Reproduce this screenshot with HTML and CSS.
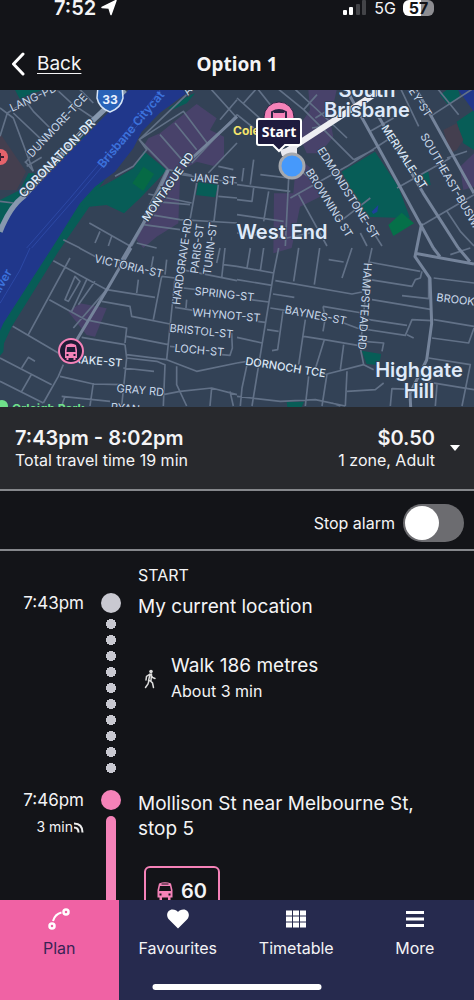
FILE: index.html
```
<!DOCTYPE html>
<html lang="en">
<head>
    <meta charset="UTF-8">
    <meta name="viewport" content="width=device-width, initial-scale=1">
    <title>Option 1</title>
    <link rel="stylesheet" href="styles.css">
</head>
<body>
    <div class="app">
        <div class="status-bar">
            <div class="status-time">
                <span>7:52</span>
                <svg width="16" height="16" viewBox="0 0 16 16"><path d="M15 .5 10 14.500 8 8 1 7.500z" fill="#fff" stroke="#fff" stroke-width="1.500" stroke-linejoin="round"/></svg>
            </div>
            <div class="status-right">
                <svg width="24" height="16" viewBox="0 0 24 16">
                    <rect x="0" y="10" width="4" height="5" rx="1" fill="#fff"/>
                    <rect x="6" y="7" width="4" height="8" rx="1" fill="#fff"/>
                    <rect x="13" y="4" width="4" height="11" rx="1" fill="#434448"/>
                    <rect x="19" y="0" width="4" height="15" rx="1" fill="#434448"/>
                </svg>
                <span>5G</span>
                <span class="battery">57</span>
            </div>
        </div>

        <header class="top-bar">
            <a class="back" href="#">
                <svg width="14" height="24" viewBox="0 0 14 24"><path d="M12 2 2.500 12 12 22" fill="none" stroke="#fff" stroke-width="3" stroke-linecap="round" stroke-linejoin="round"/></svg>
                <span>Back</span>
            </a>
            <h1>Option 1</h1>
        </header>

        <main class="content">
            <svg class="map" viewBox="0 0 474 317" preserveAspectRatio="xMidYMid slice">
                <!-- land, water and parks -->
                <rect class="land" x="-500" width="1500" height="317"/>
                <g transform="scale(.33333)">
                    <path class="park" d="M0 330 60 300 85 250 105 250 90 290 330 65 400 0 500 0 300 290 178 480 35 710 12 760 10 785 0 797z"/>
                    <path class="park" d="M505 55 570 15 585 10 560 40 515 60z"/>
                    <path class="park" d="M45 0H125L60 28z"/>
                    <path fill="#443f4f" d="M0 130 78 245 50 300 0 300z"/>
                    <path class="park" d="M430 182 500 240 480 262 420 325 372 370 320 345 268 350 178 480 150 474 285 300 345 268 400 235z"/>
                    <path fill="#344156" d="M430 120 420 155 435 178 400 235 345 265 300 288 360 230 400 150z"/>
                    <path fill="#066a45" d="M430 230 462 252 430 303 397 280z"/>
                    <path class="water" d="M385 0H575L545 20 480 68 425 125 400 175 345 245 285 290 240 340 165 460 10 700 0 722V430L30 370 80 315 320 72z"/>
                    <path d="M80 474 210 325 420 75 480 0M95 474 225 325 435 80M0 640 60 540 90 474" fill="none" stroke="#2c48a5" stroke-width="3"/>
                    <path class="zone" d="M560 65 590 42 650 85 630 120 672 140 672 205 640 228 590 215 540 245 500 240 430 170 445 145 480 130z"/>
                    <path class="zone" d="M505 245 540 265 535 400 470 440 430 474 410 450 430 390z"/>
                    <path class="zone" d="M240 640 320 655 285 740 260 735 205 665z"/>
                    <path class="park" d="M595 275 655 285 645 322 588 315z"/>
                    <path class="zone" d="M925 0 1010 0 990 90 1000 140 960 190 920 190 890 120 930 60z"/>
                    <path class="zone" d="M822 310 880 310 890 200 940 240 960 320 900 350 875 474 820 490z"/>
                    <path class="zone" d="M1380 230 1422 190V290L1390 300z"/>
                    <path class="park" d="M1025 245 1125 185 1195 290 1230 385 1095 380z"/>
                    <path fill="#057049" d="M1165 405 1205 368 1242 400 1180 438z"/>
                    <path fill="#1e4199" d="M1115 365 1135 345 1132 365 1120 372z"/>
                    <path class="park" d="M1268 250 1285 245 1292 285 1270 285zM1320 15 1340 0H1375L1380 20 1345 45zM1370 95 1422 60V180L1390 160z"/>
                    <path class="water" d="M1375 0H1422V65z"/>
                    <path fill="#443f4f" d="M1330 120 1370 100 1390 150 1370 180 1350 190z"/>
                    <path class="park" d="M1085 782 1143 792 1138 825 1100 822zM860 935H912L905 951H862z"/>
                </g>

                <!-- minor roads -->
                <g class="roads" transform="scale(.33333)">
                    <g transform="translate(0 -6)">
                        <path d="M0 60 40 90 100 250M0 145 22 75 80 40M40 75 130 160 75 225M70 30 100 70 150 120M75 220 100 250M80 235 125 208M165 0 230 60M220 50 280 90M235 0 280 45"/>
                        <path d="M418 155 550 70 625 170M418 155 505 245 575 262M480 140 550 220M525 105 590 185M560 20 418 155 440 185 400 235 345 265M630 0 711 90M711 35 660 95M575 225 711 80M625 255 711 165M500 245 430 390M655 235 700 245M530 258 711 285M590 285 570 395M655 290 642 400M445 318 575 345M460 340 570 350M655 325 711 330M450 380 540 395 711 405M430 410 540 425M268 405 390 474M300 430 285 465M335 445 325 474M440 395 395 474M410 465 470 480M190 455 240 480M0 340 40 345"/>
                    </g>
                    <g transform="translate(711 -6)">
                        <path d="M0 30 90 110M20 45 60 0M0 80 50 120M120 0 200 65 350 215M170 0 235 60 330 150M200 65 240 20M235 90 300 50M225 120 290 110M350 215 410 185M160 330 330 235 460 150M185 320 270 474M220 270 180 240M60 0 100 50M70 260 155 270M0 290 160 310M155 270 145 474M20 240 15 280M50 215 40 290M0 335 45 340 50 300M0 380 140 400M95 310 80 400M310 400 400 330M370 435 390 474M0 435 150 450 240 430M350 340 435 474M480 300 640 210M550 415 711 320M400 130 470 90M580 85 711 0M490 0 545 115M600 0 665 80M630 210 690 190M630 370 670 430 711 474"/>
                    </g>
                    <g transform="translate(0 474)">
                        <path d="M160 38 320 125 465 148M210 30 85 260M148 155 265 220M38 235 175 315M238 0 290 28M260 95 215 190M320 125 220 240M285 100 235 170M305 160 390 175 395 205 510 228M270 218 380 240 375 285M245 268 375 290M380 265 505 290M375 290 380 330 365 474M380 320 500 335 590 370 711 345M380 330 470 340 495 350 490 474M370 360 462 370M180 385 280 408 365 410M190 350 175 385 130 465M0 330 155 410M65 360 85 328 105 340M95 378 65 430M0 400 130 465M280 405 270 474M185 445 330 460M195 445 185 474M490 440 540 430 635 420 711 440M530 355 530 410 560 474M635 420 630 474M690 430 700 474M460 25 450 80M500 35 495 80M415 95 410 135M485 85 460 215M485 85 525 90M525 90 500 335M550 120 590 125M525 178 585 188M560 155 558 180M510 295 530 297M545 65 711 98M660 0 650 45M675 0 665 90M670 50 711 55M665 320 690 322 697 300 695 255"/>
                        <path d="M225 85 195 155 205 160 240 100z"/>
                    </g>
                    <g transform="translate(711 474)">
                        <path d="M0 55 110 75M40 0 30 60M80 0 70 68M125 0 110 75 45 474M185 0 170 100M248 0 232 110M0 95 105 112M115 98 345 138 375 132M275 35 320 42M345 0 315 90M405 0 395 45 370 300 380 350M395 42 550 70M398 95 525 115 535 95 550 90 555 70M405 155 585 185M495 143 575 152 575 90M108 138 172 148M40 155 95 162M100 180 150 188M60 220 85 223M138 190 122 305 105 308M90 245 125 250M205 215 185 350M258 175 265 210 258 250M258 175 375 195M375 212 510 232M320 225 360 240 505 262 525 215 585 218M510 260 530 270M0 268 75 285M200 265 262 275 380 295M262 275 235 362M320 290 310 365M380 280 440 285 435 310M235 380 270 378 380 350 410 365M270 378 255 474M215 385 205 474M330 370 325 474M30 350 15 420 10 474M0 345 30 340M330 430 415 425 440 405M0 445 130 460 235 455 325 474M285 465 310 474M590 90 711 105M590 215 711 235M585 270 695 285 711 240M575 330 700 350 675 474M560 400 711 425M465 420 460 474M465 422 520 424M600 410 595 474M640 20 700 0"/>
                    </g>
                </g>
                <!-- main roads -->
                <g class="roads wide" transform="scale(.33333)">
                    <path d="M393 474 320 600 230 750M505 240 430 400 360 520M711 80 570 210"/>
                    <path d="M1040 0 1200 290 1300 474M1130 70 1270 310 1375 474M1250 0 1422 310M1265 400 1245 500 1290 565 1295 700 1280 810 1230 910 1232 951M1245 490 1422 522M1300 474 1320 500M1375 474 1410 515"/>
                    <path d="M375 0 275 95 70 320Q30 350 0 425" stroke="#8798ae" stroke-width="16"/>
                </g>
                <path class="route" d="M287 61 378 2"/>

                <!-- street names -->
                <g class="street">
                    <text transform="translate(12 22) rotate(-25)">LANG-PDE</text>
                    <text class="mid" transform="translate(60 38) rotate(-47)">DUNMORE-TCE</text>
                    <text class="mid big" transform="translate(60 71) rotate(-46)">CORONATION-DR</text>
                    <text class="mid river" transform="translate(134 42) rotate(-50)">Brisbane Citycat</text>
                    <text class="mid river" transform="translate(5 195) rotate(-60)">River</text>
                    <text class="mid bold" transform="translate(171 99) rotate(-55)">MONTAGUE RD</text>
                    <text transform="translate(188 6) rotate(-50)">A</text>
                    <text class="mid" transform="translate(213 93) rotate(5)">JANE ST</text>
                    <text class="mid" transform="translate(128 180) rotate(13)">VICTORIA-ST</text>
                    <text class="mid" transform="translate(186 172) rotate(-82)">HARDGRAVE-RD</text>
                    <text class="mid" transform="translate(201 159) rotate(-83)">PARIS-ST</text>
                    <text class="mid" transform="translate(214 159) rotate(-83)">TURIN-ST</text>
                    <text class="mid" transform="translate(224 208) rotate(6)">SPRING-ST</text>
                    <text class="mid" transform="translate(226 229) rotate(5)">WHYNOT-ST</text>
                    <text class="mid" transform="translate(201 245) rotate(6)">BRISTOL-ST</text>
                    <text class="mid" transform="translate(199 264) rotate(5)">LOCH-ST</text>
                    <text class="end bold" transform="translate(122 277) rotate(5)">DRAKE-ST</text>
                    <text class="mid" transform="translate(140 304) rotate(5)">GRAY RD</text>
                    <text class="mid" transform="translate(125 322) rotate(5)">RYAN</text>
                    <text class="mid" transform="translate(315 229) rotate(11)">BAYNES-ST</text>
                    <text class="mid bold" transform="translate(285 281) rotate(9)">DORNOCH TCE</text>
                    <text class="mid" transform="translate(361 216) rotate(94)">HAMPSTEAD RD</text>
                    <text transform="translate(436 211) rotate(7)">BROOK-ST</text>
                    <text class="mid" transform="translate(345 105) rotate(58)">EDMONDSTONE-ST</text>
                    <text class="mid" transform="translate(326 115) rotate(58)">BROWNING ST</text>
                    <text class="mid bold" transform="translate(401 69) rotate(57)">MERIVALE-ST</text>
                    <text class="mid" transform="translate(413 8) rotate(57)">GREY-ST</text>
                    <text transform="translate(420 46) rotate(60)">SOUTHEAST-BUSWAY</text>
                </g>
                <g class="suburb">
                    <text x="367" y="7">South</text>
                    <text x="367" y="27">Brisbane</text>
                    <text x="282" y="149">West End</text>
                    <text x="419" y="287">Highgate</text>
                    <text x="419" y="308">Hill</text>
                </g>
                <text class="place coles" x="233" y="45">Coles</text>
                <text class="place green" x="12" y="323">Orleigh Park</text>
                <circle cx="2" cy="316" r="6" fill="#6fe08a"/>

                <!-- route shield and hospital -->
                <path d="M98-4H122L123 8Q121 18 110 22 99 18 97 8z" fill="#2862b8" stroke="#d6e4f6" stroke-width="1.500"/>
                <text class="shield" x="110" y="14">33</text>
                <circle cx="0" cy="67" r="8" fill="#e5636b"/>
                <path d="M-4 67H4M0 63V71" stroke="#3a2030" stroke-width="2"/>

                <!-- bus stops -->
                <g id="stop-a">
                    <circle cx="71" cy="261" r="12" fill="#1e1b36" stroke="#f582b8" stroke-width="2"/>
                    <path fill="#f582b8" fill-rule="evenodd" d="M66 255Q71 252 76 255L77 260V268H75.500V270H73.500V268H68.500V270H66.500V268H65V260zM67 257 66.500 262H75.500L75 257zM66.500 264V266H68.500V264zM73.500 264V266H75.500V264z"/>
                </g>
                <circle cx="279" cy="27" r="15" fill="#f582b8" stroke="#2c2444"/>
                <path d="M272 31V22Q279 18 286 22V31M274 22H284" fill="none" stroke="#2c2444" stroke-width="2"/>

                <!-- start marker -->
                <path fill="#e8e8ee" d="M280 60 297 55V66H282z"/>
                <path d="M259 29H299Q301 29 301 31V53Q301 55 299 55H285L279 61 273 55H259Q257 55 257 53V31Q257 29 259 29z" fill="#1e1b3e" stroke="#fff" stroke-width="2"/>
                <text class="start" x="279" y="47">Start</text>
                <circle cx="292" cy="76" r="12" fill="#4699fb" stroke="#a5a8ae" stroke-width="3"/>
            </svg>

            <section class="summary">
                <div class="summary-trip">
                    <strong>7:43pm - 8:02pm</strong>
                    <span>Total travel time 19 min</span>
                </div>
                <div class="summary-fare">
                    <strong>$0.50</strong>
                    <span>1 zone, Adult</span>
                </div>
                <button class="expand" type="button" aria-label="Fare details">
                    <svg width="10" height="6" viewBox="0 0 10 6"><path d="M0 0H10L5 6z" fill="#fff"/></svg>
                </button>
            </section>

            <div class="alarm">
                <label for="stop-alarm">Stop alarm</label>
                <input class="switch" type="checkbox" id="stop-alarm">
            </div>

            <section class="journey">
                <h2>START</h2>
                <ol class="steps">
                    <li class="step">
                        <div class="time">7:43pm</div>
                        <div class="track">
                            <span class="dot"></span>
                            <span class="walk-line"></span>
                        </div>
                        <div class="detail">
                            <div class="place-name">My current location</div>
                            <div class="leg">
                                <svg width="24" height="20" viewBox="0 0 24 20">
                                    <circle cx="13" cy="2.500" r="1.800" fill="#ddd"/>
                                    <path d="M12 5 10.500 12M12 5 8.500 7.500 8 11M13 6 14.500 8.500 17 9.500M13.500 5 13 11.500" fill="none" stroke="#ddd" stroke-width="1.500" stroke-linecap="round"/>
                                    <path d="M11 11.500 10 15 7.500 18.500M12 11.500 14.500 14 15.500 18.500" fill="none" stroke="#ddd" stroke-width="1.500" stroke-linecap="round"/>
                                </svg>
                                <div>
                                    <div class="place-name">Walk 186 metres</div>
                                    <div class="leg-time">About 3 min</div>
                                </div>
                            </div>
                        </div>
                    </li>
                    <li class="step bus">
                        <div class="time">
                            7:46pm
                            <div class="live">3 min<svg width="11" height="11" viewBox="0 0 11 11"><path d="M1 1.500Q9.500 1.500 9.500 10.500M1 5.500Q5.500 5.500 5.500 10.500" fill="none" stroke="#eee" stroke-width="2"/></svg></div>
                        </div>
                        <div class="track">
                            <span class="dot"></span>
                            <span class="bus-line"></span>
                        </div>
                        <div class="detail">
                            <div class="place-name">Mollison St near Melbourne St, stop 5</div>
                            <div class="route-badge">
                                <svg width="16" height="18" viewBox="0 0 16 18"><path fill="#f582b8" fill-rule="evenodd" d="M2 1.500Q8-.8 14 1.500L15.500 8V15.500H13.500V18H11V15.500H5V18H2.500V15.500H.5V8zM4.500 1.500V2.500H11.500V1.500zM3 4 2 9H14L13 4zM2.500 11.500V13.500H4.500V11.500zM11.500 11.500V13.500H13.500V11.500z"/></svg>
                                <span>60</span>
                            </div>
                        </div>
                    </li>
                </ol>
            </section>
        </main>

        <nav class="tabs">
            <a class="tab active" href="#">
                <svg width="24" height="24" viewBox="0 0 24 24" fill="none" stroke="#fff" stroke-width="2.500"><circle cx="5" cy="19" r="2.500"/><circle cx="19" cy="5" r="2.500"/><path d="M6 14Q8 7 14.500 5.500" stroke-width="2"/></svg>
                <span>Plan</span>
            </a>
            <a class="tab" href="#">
                <svg width="24" height="24" viewBox="0 0 24 24"><path d="M12 21.500 3 12.500C-1 8 2 2.500 6.500 2.500 9 2.500 11 3.500 12 5 13 3.500 15 2.500 17.500 2.500 22 2.500 25 8 21 12.500z" fill="#fff"/></svg>
                <span>Favourites</span>
            </a>
            <a class="tab" href="#">
                <svg width="24" height="24" viewBox="0 0 24 24" fill="#fff"><path d="M2 3.500h6v5H2zM9 3.500h6v5H9zM16 3.500h6v5h-6zM2 9.500h6v5H2zM9 9.500h6v5H9zM16 9.500h6v5h-6zM2 15.500h6v5H2zM9 15.500h6v5H9zM16 15.500h6v5h-6z"/></svg>
                <span>Timetable</span>
            </a>
            <a class="tab" href="#">
                <svg width="24" height="24" viewBox="0 0 24 24"><path d="M3 5.500H21M3 12H21M3 18.500H21" stroke="#fff" stroke-width="3"/></svg>
                <span>More</span>
            </a>
            <span class="home-indicator"></span>
        </nav>
    </div>
</body>
</html>
```

FILE: styles.css
```
* {
    box-sizing: border-box;
}
body {
    margin: 0;
    background-color: #131418;
    color: #f4f4f6;
    font-family: Inter, "Liberation Sans", sans-serif;
    font-size: 16px;
    line-height: 20px;
}
svg {
    display: block;
    flex: none;
}
a {
    color: inherit;
}
.app {
    display: flex;
    flex-direction: column;
    height: 100vh;
    overflow: hidden;
}

/* status bar */
.status-bar {
    display: flex;
    flex: none;
    justify-content: space-between;
    height: 38px;
    padding: 0 40px 0 54px;
    line-height: 16px;
}
.status-time {
    display: flex;
    gap: 5px;
    font-size: 20px;
    font-weight: 600;
}
.status-right {
    display: flex;
    align-items: flex-start;
    gap: 7px;
}
.battery {
    width: 31px;
    border-radius: 6px;
    background: linear-gradient(to right, #fff 57%, #8d8d91 57%);
    color: #131418;
    font-weight: 700;
    text-align: center;
}

/* header */
.top-bar {
    display: grid;
    grid-template-columns: 1fr auto 1fr;
    flex: none;
    align-items: center;
    height: 52px;
    padding: 0 11px;
}
.back {
    display: flex;
    align-items: center;
    gap: 12px;
    font-size: 19px;
    text-decoration: none;
}
.back span {
    text-decoration: underline;
    text-underline-offset: 3px;
}
.top-bar h1 {
    margin: 0;
    font-family: "Noto Sans", sans-serif;
    font-size: 19px;
    font-weight: 700;
}
.content {
    flex: 1;
    min-height: 0;
    overflow-y: auto;
    scrollbar-width: none;
}

/* map */
.map {
    width: 100%;
    height: 317px;
}
.land {
    fill: #334256;
}
.water {
    fill: #20378b;
}
.park {
    fill: #075d57;
}
.zone {
    fill: #48426a;
}
.roads {
    fill: none;
    stroke: #627187;
    stroke-width: 5;
    stroke-linejoin: round;
}
.roads.wide {
    stroke: #75849b;
    stroke-width: 9;
}
.route {
    stroke: #eeeef2;
    stroke-width: 6;
}
.street {
    fill: #c9d8ea;
    stroke: #334256;
    stroke-width: 2;
    paint-order: stroke;
    font-size: 11px;
}
.mid {
    text-anchor: middle;
}
.end {
    text-anchor: end;
}
.bold {
    font-weight: 500;
    fill: #dce8f6;
}
.big {
    font-size: 12px;
    font-weight: 600;
    fill: #dce8f6;
}
.river {
    fill: #3c72dc;
    stroke: none;
    font-size: 12px;
    font-weight: 600;
}
.suburb {
    fill: #dfeafa;
    stroke: #334256;
    stroke-width: 2;
    paint-order: stroke;
    font-size: 20px;
    font-weight: 600;
    text-anchor: middle;
}
.place {
    font-size: 12px;
    font-weight: 700;
}
.coles {
    fill: #f3e36b;
}
.green {
    fill: #6fe08a;
}
.shield {
    fill: #e8f1ff;
    font-size: 12px;
    font-weight: 700;
    text-anchor: middle;
}
.start {
    fill: #fff;
    font-family: "Noto Sans", sans-serif;
    font-size: 14px;
    font-weight: 700;
    text-anchor: middle;
}

/* trip summary */
.summary {
    display: flex;
    align-items: flex-start;
    padding: 19px 14px 19px 15px;
    border-bottom: 2px solid #85878b;
    background-color: #28292d;
}
.summary strong {
    display: block;
    font-size: 20px;
    font-weight: 600;
    line-height: 24px;
}
.summary-trip {
    flex: 1;
}
.summary-fare {
    text-align: right;
}
.expand {
    align-self: center;
    margin-left: 15px;
    padding: 0;
    border: none;
    background: none;
}
.alarm {
    display: flex;
    align-items: center;
    justify-content: flex-end;
    gap: 8px;
    height: 60px;
    padding: 5px 10px 0 0;
    border-bottom: 2px solid #85878b;
}
.switch {
    width: 61px;
    height: 38px;
    margin: 0;
    padding: 2px;
    border-radius: 19px;
    background-color: #6c6c70;
    appearance: none;
}
.switch::before {
    content: "";
    display: block;
    width: 34px;
    height: 34px;
    border-radius: 50%;
    background-color: #fff;
}
.switch:checked::before {
    margin-left: 23px;
}

/* journey steps */
.journey {
    padding-top: 14px;
}
.journey h2 {
    margin: 0 0 8px 138px;
    font-size: 16px;
    font-weight: 400;
}
.steps {
    margin: 0;
    padding: 0;
    list-style: none;
}
.step {
    display: grid;
    grid-template-columns: 84px 54px 1fr;
    padding-right: 24px;
}
.time {
    font-size: 17px;
    text-align: right;
}
.track {
    display: flex;
    flex-direction: column;
    align-items: center;
}
.dot {
    width: 20px;
    height: 20px;
    border-radius: 50%;
    background-color: #c9c9d1;
}
.walk-line {
    width: 10px;
    height: 160px;
    margin: 3px 0 14px;
    background: radial-gradient(circle, #c9c9d1 5px, transparent 5px) 0 0 / 10px 16px;
}
.bus .dot {
    background-color: #f582b8;
}
.bus-line {
    flex: 1;
    width: 10px;
    margin-top: 6px;
    border-radius: 5px 5px 0 0;
    background-color: #f582b8;
}
.detail {
    padding-top: 1px;
}
.place-name {
    font-size: 19px;
    line-height: 25px;
}
.leg {
    display: flex;
    align-items: center;
    gap: 9px;
    margin-top: 34px;
}
.leg-time {
    line-height: 26px;
}
.live {
    display: flex;
    align-items: center;
    justify-content: flex-end;
    margin-top: 7px;
    font-size: 14px;
}
.route-badge {
    display: flex;
    align-items: center;
    justify-content: center;
    gap: 8px;
    width: 76px;
    height: 50px;
    margin: 25px 0 20px 6px;
    border: 2px solid #f582b8;
    border-radius: 6px;
    font-size: 20px;
    font-weight: 600;
}

/* bottom tabs */
.tabs {
    position: relative;
    display: grid;
    grid-template-columns: repeat(4, 1fr);
    flex: none;
    height: 100px;
    background-color: #262a4e;
}
.tab {
    display: flex;
    flex-direction: column;
    align-items: center;
    gap: 7px;
    padding-top: 7px;
    text-decoration: none;
}
.tab.active {
    background-color: #f062a4;
    color: #3a2355;
}
.home-indicator {
    position: absolute;
    bottom: 10px;
    left: 50%;
    width: 169px;
    height: 6px;
    border-radius: 3px;
    background-color: #fff;
    transform: translateX(-50%);
}
```
